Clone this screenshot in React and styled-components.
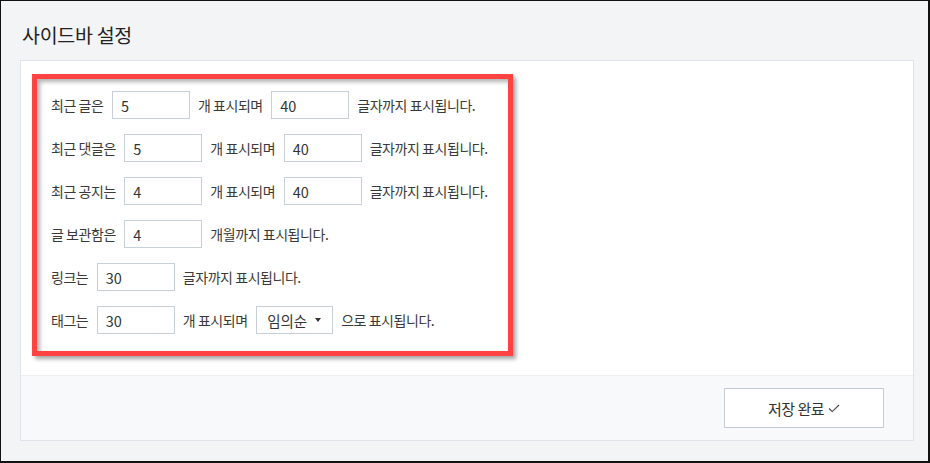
import React from "react";
import styled, { createGlobalStyle } from "styled-components";

const GlobalStyle = createGlobalStyle`
  body {
    margin: 0;
    font-family: "Noto Sans CJK KR", "Noto Sans", sans-serif;
  }
`;

const rows = [
  { label: "최근 글은", count: "5", mid: "개 표시되며", length: "40", tail: "글자까지 표시됩니다." },
  { label: "최근 댓글은", count: "5", mid: "개 표시되며", length: "40", tail: "글자까지 표시됩니다." },
  { label: "최근 공지는", count: "4", mid: "개 표시되며", length: "40", tail: "글자까지 표시됩니다." },
  { label: "글 보관함은", count: "4", tail: "개월까지 표시됩니다." },
  { label: "링크는", count: "30", tail: "글자까지 표시됩니다." },
  { label: "태그는", count: "30", mid: "개 표시되며", order: "임의순", tail: "으로 표시됩니다." },
];

const App = () => {
  return (
    <>
      <GlobalStyle />
      <Frame>
        <Title>사이드바 설정</Title>
        <Panel>
          <Body>
            <Marked>
              {rows.map((r) => (
                <Row key={r.label}>
                  <Label>{r.label}</Label>
                  <Input defaultValue={r.count} />
                  {r.mid && <Label>{r.mid}</Label>}
                  {r.length && <Input defaultValue={r.length} />}
                  {r.order && (
                    <Select>
                      <span>{r.order}</span>
                      <Caret />
                    </Select>
                  )}
                  <Label>{r.tail}</Label>
                </Row>
              ))}
            </Marked>
          </Body>
          <Footer>
            <SaveButton>
              저장 완료
              <svg width="12" height="9" viewBox="0 0 12 9">
                <polyline
                  points="1,4.5 4.2,7.6 11,1"
                  fill="none"
                  stroke="#444"
                  strokeWidth="1.1"
                />
              </svg>
            </SaveButton>
          </Footer>
        </Panel>
      </Frame>
    </>
  );
};

export default App;

const Frame = styled.div`
  width: 930px;
  height: 463px;
  box-sizing: border-box;
  border-style: solid;
  border-color: #111;
  border-width: 1px 2px 2px 1px;
  background: #f3f4f6;
  padding: 0 14px 0 19px;
`;
const Title = styled.h1`
  margin: 21px 0 12px 2px;
  font-size: 19.5px;
  line-height: 26px;
  font-weight: 400;
  letter-spacing: -0.3px;
  color: #222;
`;
const Panel = styled.div`
  border: 1px solid #dfe3ea;
  background: #fff;
`;
const Body = styled.div`
  height: 314px;
  box-sizing: border-box;
  padding: 13px 11px 0;
`;
const Marked = styled.div`
  width: 481px;
  box-sizing: border-box;
  border: 5px solid #ff4343;
  padding: 12px 10px 17px 14px;
  display: flex;
  flex-direction: column;
  gap: 15px;
  box-shadow: 3px 3px 4px rgba(0, 0, 0, 0.35),
    inset 3px 3px 4px rgba(0, 0, 0, 0.3);
`;
const Row = styled.div`
  display: flex;
  align-items: center;
  gap: 8px;
  height: 28px;
`;
const Label = styled.span`
  font-size: 14px;
  letter-spacing: -0.45px;
  color: #3a3a3a;
  white-space: nowrap;
  padding-right: 0.5px;
`;
const Input = styled.input`
  width: 78px;
  height: 28px;
  box-sizing: border-box;
  border: 1px solid #c8cfd9;
  border-radius: 0;
  padding: 0 8px;
  font-family: inherit;
  font-size: 14.5px;
  color: #333;
  outline: none;
`;
const Select = styled.div`
  width: 77px;
  height: 28px;
  box-sizing: border-box;
  border: 1px solid #c8cfd9;
  padding: 0 11px 0 10px;
  display: flex;
  align-items: center;
  justify-content: space-between;
  font-size: 14.5px;
  color: #333;
`;
const Caret = styled.span`
  width: 0;
  height: 0;
  border-left: 3px solid transparent;
  border-right: 3px solid transparent;
  border-top: 4px solid #333;
`;
const Footer = styled.div`
  height: 64px;
  border-top: 1px solid #eceef2;
  background: #f8f9fb;
  display: flex;
  align-items: center;
  justify-content: flex-end;
  padding-right: 29px;
`;
const SaveButton = styled.button`
  width: 160px;
  height: 40px;
  border: 1px solid #c5ccd6;
  background: #fff;
  display: flex;
  align-items: center;
  justify-content: center;
  gap: 4px;
  font-family: inherit;
  font-size: 15px;
  letter-spacing: -0.5px;
  color: #333;
  cursor: pointer;
`;
